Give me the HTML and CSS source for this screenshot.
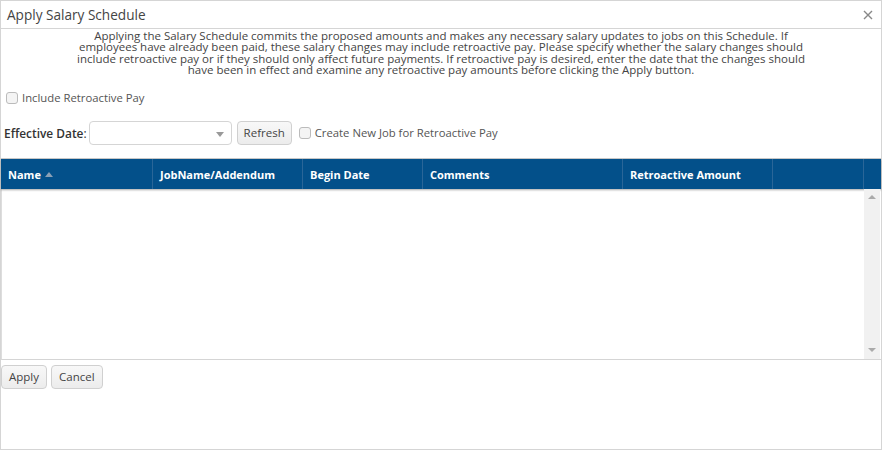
FILE: index.html
```html
<!DOCTYPE html>
<html>
<head>
<meta charset="utf-8">
<link rel="stylesheet" href="styles.css">
</head>
<body>
<div class="window">
  <div class="titlebar">
    <span class="title">Apply Salary Schedule</span>
    <svg class="close" width="10" height="10" viewBox="0 0 10 10"><path d="M1 1 L9 9 M9 1 L1 9" stroke="#888" stroke-width="1.4" fill="none"/></svg>
  </div>
  <div class="content">
    <p class="intro">Applying the Salary Schedule commits the proposed amounts and makes any necessary salary updates to jobs on this Schedule. If employees have already been paid, these salary changes may include retroactive pay. Please specify whether the salary changes should include retroactive pay or if they should only affect future payments. If retroactive pay is desired, enter the date that the changes should have been in effect and examine any retroactive pay amounts before clicking the Apply button.</p>
    <label class="check-row"><span class="box"></span>Include Retroactive Pay</label>
    <div class="date-row">
      <span class="label"><b>Effective Date</b>:</span>
      <span class="dropdown"><span class="caret"></span></span>
      <button class="btn">Refresh</button>
      <label class="check-inline"><span class="box"></span>Create New Job for Retroactive Pay</label>
    </div>
    <div class="grid">
      <div class="grid-head">
        <div class="th c1">Name <span class="sort"></span></div>
        <div class="th c2">JobName/Addendum</div>
        <div class="th c3">Begin Date</div>
        <div class="th c4">Comments</div>
        <div class="th c5">Retroactive Amount</div>
        <div class="th c6"></div>
        <div class="th c7"></div>
      </div>
      <div class="grid-body">
        <div class="rows"></div>
        <div class="scrollbar"><span class="up"></span><span class="down"></span></div>
      </div>
    </div>
    <div class="actions">
      <button class="btn">Apply</button>
      <button class="btn">Cancel</button>
    </div>
  </div>
</div>
</body>
</html>
```

FILE: styles.css
```css
* { box-sizing: border-box; }
html, body { margin: 0; padding: 0; background: #fff; }
body { font-family: "Open Sans", "DejaVu Sans", sans-serif; color: #333; font-size: 11.3px; }
.window {
  width: 882px; height: 450px;
  border: 1px solid #d5d5d5;
  display: flex; flex-direction: column;
}
.titlebar {
  height: 28px; flex: none;
  border-bottom: 1px solid #d5d5d5;
  display: flex; align-items: center; justify-content: space-between;
  padding: 0 8px 0 6px;
}
.title { font-size: 13.6px; color: #444; }
.close { display: block; margin-top: 1px; }
.content { padding: 0; flex: 1; display: flex; flex-direction: column; }
.intro {
  margin: 0 auto; width: 740px; text-align: center;
  font-size: 11.5px; line-height: 11.4px; color: #444;
  padding-top: 1px;
}
.box {
  display: inline-block; width: 12px; height: 12px;
  border: 1px solid #bbb; border-radius: 3px; background: #f4f4f4;
  margin-right: 4px; vertical-align: -2px;
}
.check-row { display: block; margin: 14px 0 0 5px; color: #555; }
.date-row { display: flex; align-items: center; margin: 16px 0 0 3px; height: 24px; }
.label { color: #333; margin-right: 2px; font-size: 11.9px; }
.label b { font-weight: 600; }
.dropdown {
  width: 143px; height: 24px; border: 1px solid #d5d5d5; border-radius: 4px;
  position: relative; background: #fff;
}
.caret {
  position: absolute; right: 7px; top: 10px;
  border-left: 4px solid transparent; border-right: 4px solid transparent; border-top: 5px solid #999;
}
.btn {
  font-family: inherit; font-size: 11.5px; color: #444;
  height: 24px; padding: 0 6px; border: 1px solid #d0d0d0; border-radius: 4px;
  background: linear-gradient(#f8f8f8, #ececec);
}
.date-row .btn { margin-left: 5px; }
.check-inline { margin-left: 7px; color: #555; }
.grid { margin-top: 13px; border-top: 1px solid #ccc; }
.grid-head {
  display: flex; height: 30px; background: #03508a;
  box-shadow: 0 1px 2px rgba(0,0,0,0.35);
  position: relative;
}
.th {
  color: #fff; font-weight: 700; font-size: 11px;
  display: flex; align-items: center; padding-left: 7px; padding-top: 2px;
  border-left: 1px solid #2a6698;
}
.c1 { width: 151px; border-left: none; padding-left: 7px; }
.c2 { width: 150px; }
.c3 { width: 120px; }
.c4 { width: 200px; }
.c5 { width: 150px; }
.c6 { width: 91px; }
.c7 { flex: 1; }
.sort {
  display: inline-block; margin-left: 4px;
  border-left: 4px solid transparent; border-right: 4px solid transparent; border-bottom: 5px solid #8aa0b6;
}
.grid-body { display: flex; height: 171px; border-left: 1px solid #ddd; border-bottom: 1px solid #d5d5d5; }
.rows { flex: 1; }
.scrollbar { width: 16px; background: #f1f1f1; position: relative; margin-right: 1px; }
.up, .down { position: absolute; left: 4px; border-left: 4px solid transparent; border-right: 4px solid transparent; }
.up { top: 6px; border-bottom: 4px solid #aaa; }
.down { bottom: 7px; border-top: 4px solid #aaa; }
.actions { display: flex; gap: 4px; margin-top: 5px; padding-left: 0; }
.actions .btn { height: 24px; padding: 0 7px; }
```
